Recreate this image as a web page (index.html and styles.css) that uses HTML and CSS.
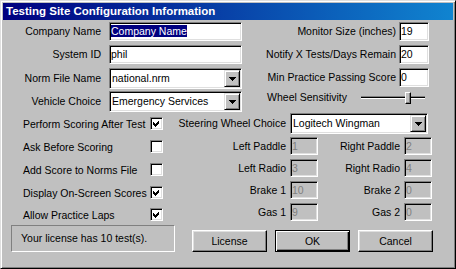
FILE: index.html
```html
<!DOCTYPE html>
<html lang="en">
  <head>
    <meta charset="UTF-8">
    <title>Testing Site Configuration Information</title>
    <link rel="stylesheet" href="styles.css">
  </head>
  <body>
    <div class="window">
      <div class="titlebar">Testing Site Configuration Information</div>

      <!-- top fields -->
      <div class="top">
        <div class="form-left">
          <label class="label">Company Name</label>
          <div class="field"><span class="sel">Company Name</span></div>

          <label class="label">System ID</label>
          <div class="field">phil</div>

          <label class="label tall">Norm File Name</label>
          <div class="combo">
            <span class="value">national.nrm</span>
            <span class="drop"><svg width="7" height="4" viewBox="0 0 7 4"><polygon points="0,0 7,0 3.5,4" fill="#000"/></svg></span>
          </div>

          <label class="label tall">Vehicle Choice</label>
          <div class="combo">
            <span class="value">Emergency Services</span>
            <span class="drop"><svg width="7" height="4" viewBox="0 0 7 4"><polygon points="0,0 7,0 3.5,4" fill="#000"/></svg></span>
          </div>
        </div>

        <div class="form-right">
          <label class="label">Monitor Size (inches)</label>
          <div class="field">19</div>

          <label class="label">Notify X Tests/Days Remain</label>
          <div class="field">20</div>

          <label class="label">Min Practice Passing Score</label>
          <div class="field">0</div>

          <div class="slider-row">
            <span>Wheel Sensitivity</span>
            <div class="slider">
              <div class="track"></div>
              <div class="thumb"></div>
            </div>
          </div>
        </div>
      </div>

      <!-- options -->
      <div class="middle">
        <div class="checks">
          <span>Perform Scoring After Test</span>
          <span class="check on"><svg width="9" height="9" viewBox="0 0 9 9"><polygon points="1,3 3,5 7,1 7,4 3,8 1,6" fill="#000"/></svg></span>

          <span>Ask Before Scoring</span>
          <span class="check"></span>

          <span>Add Score to Norms File</span>
          <span class="check"></span>

          <span>Display On-Screen Scores</span>
          <span class="check on"><svg width="9" height="9" viewBox="0 0 9 9"><polygon points="1,3 3,5 7,1 7,4 3,8 1,6" fill="#000"/></svg></span>

          <span>Allow Practice Laps</span>
          <span class="check on"><svg width="9" height="9" viewBox="0 0 9 9"><polygon points="1,3 3,5 7,1 7,4 3,8 1,6" fill="#000"/></svg></span>
        </div>

        <div class="wheel">
          <label class="label tall steer">Steering Wheel Choice</label>
          <div class="combo steer-combo">
            <span class="value">Logitech Wingman</span>
            <span class="drop"><svg width="7" height="4" viewBox="0 0 7 4"><polygon points="0,0 7,0 3.5,4" fill="#000"/></svg></span>
          </div>

          <label class="label small">Left Paddle</label>
          <div class="field off">1</div>
          <label class="label small">Right Paddle</label>
          <div class="field off">2</div>

          <label class="label small">Left Radio</label>
          <div class="field off">3</div>
          <label class="label small">Right Radio</label>
          <div class="field off">4</div>

          <label class="label small">Brake 1</label>
          <div class="field off">10</div>
          <label class="label small">Brake 2</label>
          <div class="field off">0</div>

          <label class="label small">Gas 1</label>
          <div class="field off">9</div>
          <label class="label small">Gas 2</label>
          <div class="field off">0</div>
        </div>
      </div>

      <!-- status and buttons -->
      <div class="bottom">
        <div class="status">Your license has 10 test(s).</div>
        <div class="buttons">
          <button class="btn">License</button>
          <button class="btn default">OK</button>
          <button class="btn">Cancel</button>
        </div>
      </div>
    </div>
  </body>
</html>
```

FILE: styles.css
```css
* {
  box-sizing: border-box;
}

body {
  margin: 0;
  font-family: "Liberation Sans", Arial, sans-serif;
  font-size: 10.5px;
  color: #000;
  background-color: #c0c0c0;
}

.window {
  width: 456px;
  height: 269px;
  padding: 2px;
  border: 1px solid;
  border-color: #dfdfdf #000 #000 #dfdfdf;
  box-shadow: inset 1px 1px #fff, inset -1px -1px #808080;
  background-color: #c0c0c0;
}

.titlebar {
  height: 17px;
  padding-left: 3px;
  background: linear-gradient(to right, #000080, #1084d0);
  color: #fff;
  font-weight: bold;
  font-size: 11.5px;
  line-height: 17px;
  white-space: nowrap;
}

.label {
  text-align: right;
  white-space: nowrap;
  line-height: 19px;
}

.label.tall {
  line-height: 21px;
}

.label.small {
  line-height: 18px;
  margin-top: 1px;
}

/* sunken text box */
.field {
  height: 19px;
  padding: 0 1px;
  border: 1px solid;
  border-color: #808080 #fff #fff #808080;
  box-shadow: inset 1px 1px #000, inset -1px -1px #dfdfdf;
  background-color: #fff;
  line-height: 17px;
  white-space: nowrap;
  overflow: hidden;
}

.field.off {
  height: 18px;
  margin-top: 1px;
  line-height: 16px;
  background-color: #c0c0c0;
  color: #808080;
}

.sel {
  background-color: #000080;
  color: #fff;
}

.combo {
  display: flex;
  height: 21px;
  padding: 1px;
  border: 1px solid;
  border-color: #808080 #fff #fff #808080;
  box-shadow: inset 1px 1px #000, inset -1px -1px #dfdfdf;
  background-color: #fff;
}

.combo .value {
  flex: 1;
  padding-left: 1px;
  line-height: 17px;
  white-space: nowrap;
}

.drop {
  width: 16px;
  display: flex;
  justify-content: center;
  align-items: center;
  background-color: #c0c0c0;
  border: 1px solid;
  border-color: #dfdfdf #000 #000 #dfdfdf;
  box-shadow: inset 1px 1px #fff, inset -1px -1px #808080;
}

.drop svg {
  display: block;
  shape-rendering: crispEdges;
}

.top {
  display: flex;
  padding-top: 2px;
}

.form-left {
  display: grid;
  grid-template-columns: 98px 133px;
  grid-template-rows: 23px 23px 23px 21px;
  column-gap: 8px;
  align-items: start;
}

.form-right {
  margin-left: auto;
  margin-right: 24px;
  display: grid;
  grid-template-columns: auto 30px;
  grid-template-rows: 23px 23px 23px 21px;
  column-gap: 3px;
  align-items: start;
}

.slider-row {
  grid-column: 1 / -1;
  display: flex;
  justify-content: flex-end;
  align-items: center;
  gap: 14px;
  height: 13px;
  margin-right: 4px;
  line-height: 13px;
}

.slider {
  position: relative;
  width: 64px;
  height: 13px;
}

.slider .track {
  margin-top: 5px;
  height: 3px;
  border-top: 1px solid #808080;
  border-bottom: 1px solid #fff;
  background-color: #000;
}

.slider .thumb {
  position: absolute;
  left: 44px;
  top: 1px;
  width: 6px;
  height: 12px;
  background-color: #c0c0c0;
  border: 1px solid;
  border-color: #fff #000 #000 #fff;
  box-shadow: inset -1px -1px #808080;
}

.middle {
  display: flex;
  height: 113px;
}

.checks {
  display: grid;
  grid-template-columns: 127px 13px;
  grid-template-rows: repeat(4, 23px) 21px;
  align-items: center;
  padding-left: 20px;
  white-space: nowrap;
}

.check {
  width: 13px;
  height: 13px;
  padding: 1px;
  border: 1px solid;
  border-color: #808080 #fff #fff #808080;
  box-shadow: inset 1px 1px #000, inset -1px -1px #dfdfdf;
  background-color: #fff;
}

.check svg {
  display: block;
  shape-rendering: crispEdges;
}

.wheel {
  margin-left: auto;
  margin-right: 21px;
  display: grid;
  grid-template-columns: 109px 28px 78px 28px;
  grid-template-rows: 24px repeat(4, 22px);
  column-gap: 4px;
  align-items: start;
}

.steer {
  margin-top: 1px;
}

.steer-combo {
  grid-column: 2 / 5;
  margin-top: 1px;
  margin-right: 4px;
}

.bottom {
  display: flex;
  align-items: flex-end;
  padding-left: 8px;
}

.status {
  width: 164px;
  height: 27px;
  padding-left: 9px;
  border: 1px solid;
  border-color: #808080 #fff #fff #808080;
  line-height: 25px;
}

.buttons {
  display: flex;
  gap: 8px;
  margin-left: 17px;
}

.btn {
  width: 75px;
  height: 22px;
  padding: 0;
  font-family: inherit;
  font-size: 10.5px;
  color: #000;
  background-color: #c0c0c0;
  border: 1px solid;
  border-color: #fff #000 #000 #fff;
  box-shadow: inset -1px -1px #808080, inset 1px 1px #dfdfdf;
}

.btn.default {
  border-color: #000;
  box-shadow: inset 1px 1px #fff, inset -1px -1px #000, inset -2px -2px #808080;
}
```
